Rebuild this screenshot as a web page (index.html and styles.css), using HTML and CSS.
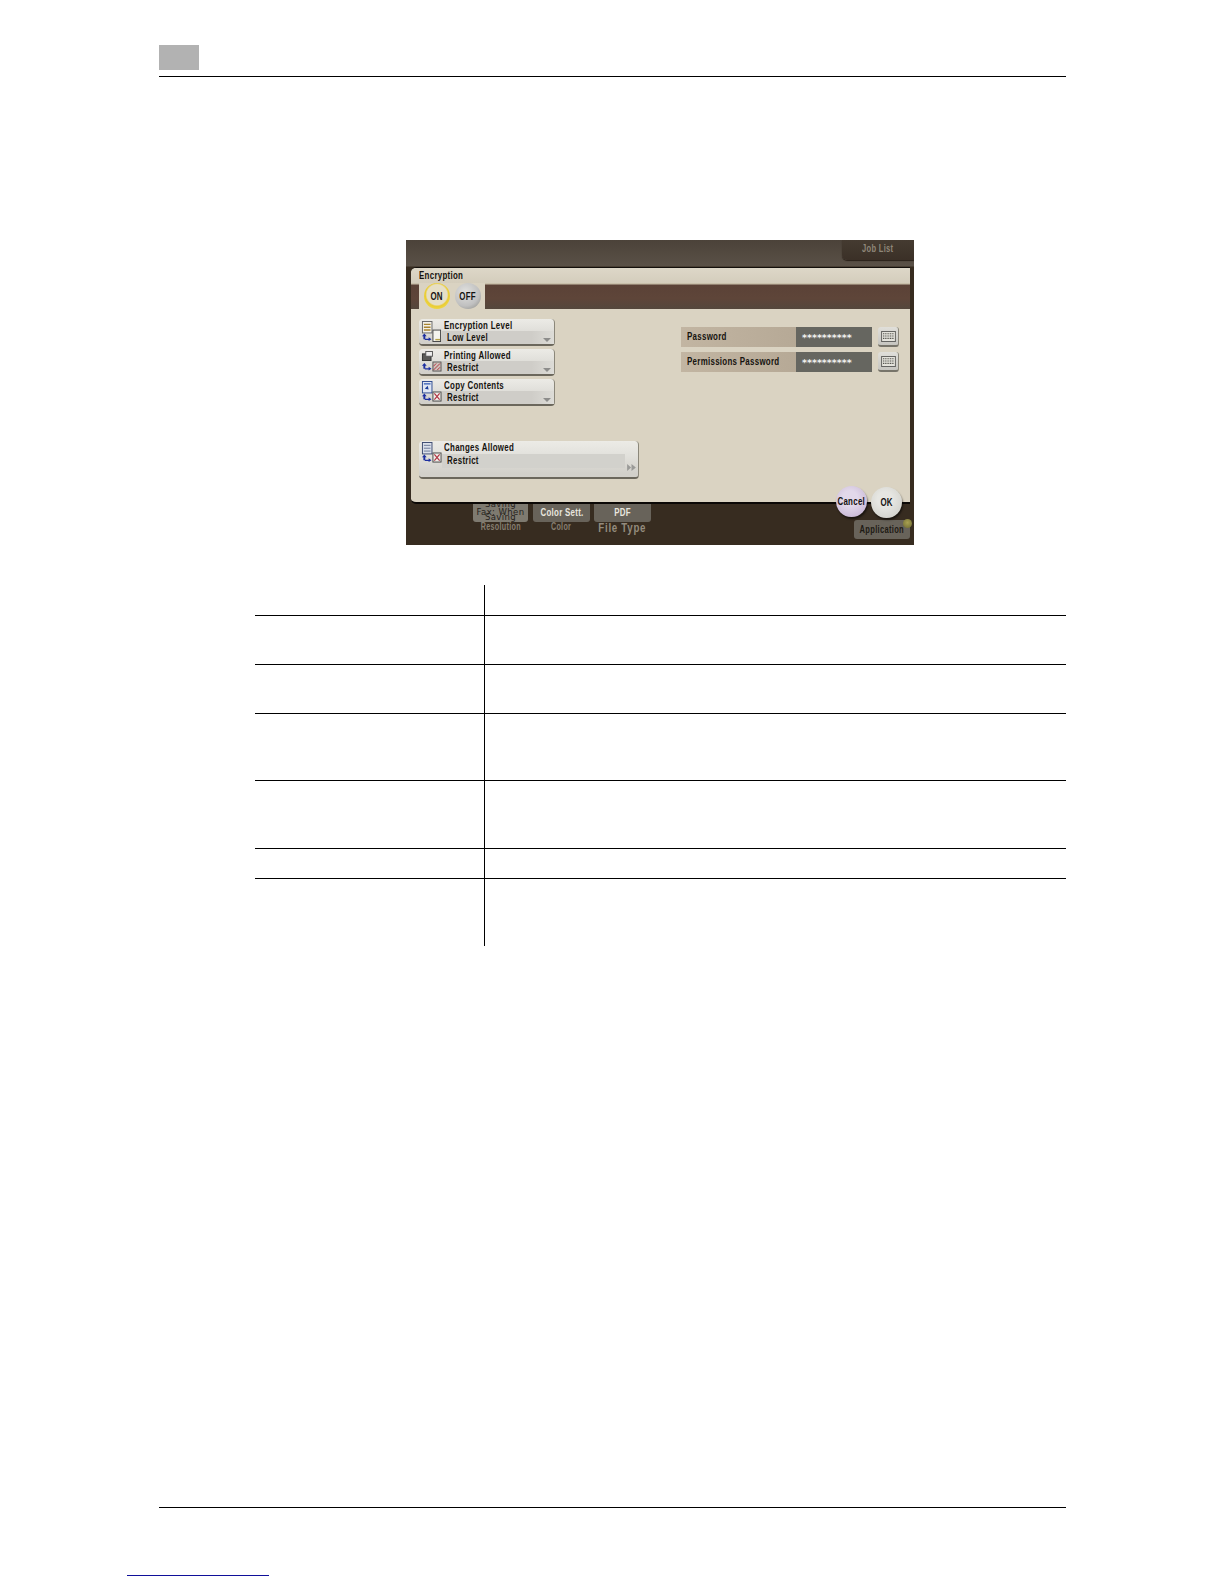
FILE: index.html
```html
<!DOCTYPE html>
<html lang="en">
<head>
<meta charset="utf-8">
<title>Encryption</title>
<link rel="stylesheet" href="styles.css">
</head>
<body>
<div class="page">
  <header class="page-head"><div class="chapter-box"></div></header>

  <section class="screen">
    <div class="topbar"><div class="job-list"><span class="t">Job List</span></div></div>

    <div class="dialog">
      <div class="dialog-title"><span class="t tl">Encryption</span></div>
      <div class="band">
        <div class="tab">
          <div class="round on"><span class="t">ON</span></div>
          <div class="round off"><span class="t">OFF</span></div>
        </div>
      </div>
      <div class="dialog-body">
        <div class="col-left">
          <div class="sel">
            <svg class="ico" viewBox="0 0 22 24"><rect x="1.500" y="1.500" width="10" height="12" fill="#f2f0e8" stroke="#666"/><path d="M3 4.500h7M3 7.500h7M3 10.500h7" stroke="#a9842f" stroke-width="1.500"/><path d="M3.500 14l2.500 3H4.500v3H2.500v-3H1z" fill="#1c2fa0"/><path d="M4 19.500h4V18l3 2-3 2v-1.200H4z" fill="#1c2fa0"/><rect x="12.500" y="10.500" width="8" height="12" fill="#f5f4ee" stroke="#444"/><path d="M15 20.500h5" stroke="#b5a24a" stroke-width="1.500"/></svg>
            <div class="sel-text"><div class="sel-name"><span class="t tl">Encryption Level</span></div><div class="sel-value"><span class="t tl">Low Level</span><span class="caret"></span></div></div>
          </div>
          <div class="sel">
            <svg class="ico" viewBox="0 0 22 24"><rect x="1.500" y="4" width="9" height="7" fill="#5a5a58" stroke="#333"/><rect x="5" y="1.500" width="7" height="5" fill="#eee" stroke="#555"/><path d="M3.500 13.500l2.500 3H4.500v3H2.500v-3H1z" fill="#1c2fa0"/><path d="M4 19h4v-1.500l3 2-3 2v-1.200H4z" fill="#1c2fa0"/><rect x="12.500" y="12.500" width="8.500" height="9.500" fill="#cfc2ba" stroke="#555"/><path d="M13 21l7-7M13 17l3-3M17 21l3-3" stroke="#b03040"/></svg>
            <div class="sel-text"><div class="sel-name"><span class="t tl">Printing Allowed</span></div><div class="sel-value"><span class="t tl">Restrict</span><span class="caret"></span></div></div>
          </div>
          <div class="sel">
            <svg class="ico" viewBox="0 0 22 24"><rect x="1.500" y="1.500" width="10" height="12" fill="#dfe6f2" stroke="#2c4a90"/><path d="M3 4h7" stroke="#3a62b8" stroke-width="1.400"/><path d="M4 9l3-3 1 4z" fill="#1c3f9c"/><path d="M3.500 14l2.500 3H4.500v3H2.500v-3H1z" fill="#1c2fa0"/><path d="M4 19.500h4V18l3 2-3 2v-1.200H4z" fill="#1c2fa0"/><rect x="12.500" y="12.500" width="8.500" height="9.500" fill="#efeee8" stroke="#444"/><path d="M14 14l5.500 6.500M19.500 14L14 20.500" stroke="#b03040" stroke-width="1.200"/></svg>
            <div class="sel-text"><div class="sel-name"><span class="t tl">Copy Contents</span></div><div class="sel-value"><span class="t tl">Restrict</span><span class="caret"></span></div></div>
          </div>
          <div class="sel sel-wide">
            <svg class="ico" viewBox="0 0 22 24"><rect x="1.500" y="1.500" width="10" height="12" fill="#dbe0ea" stroke="#3c4a70"/><path d="M3 4.500h7M3 7.500h7M3 10.500h7" stroke="#6a7796"/><path d="M3.500 14l2.500 3H4.500v3H2.500v-3H1z" fill="#1c2fa0"/><path d="M4 19.500h4V18l3 2-3 2v-1.200H4z" fill="#1c2fa0"/><rect x="12.500" y="12.500" width="8.500" height="9.500" fill="#efeee8" stroke="#444"/><path d="M14 14l5.500 6.500M19.500 14L14 20.500" stroke="#b03040" stroke-width="1.200"/></svg>
            <div class="sel-text"><div class="sel-name"><span class="t tl">Changes Allowed</span></div><div class="sel-value"><span class="t tl">Restrict</span></div></div>
            <svg class="ffwd" viewBox="0 0 10 8"><path d="M0 0l4.500 4L0 8zM5 0l5 4-5 4z" fill="#9a9a98"/></svg>
          </div>
        </div>
        <div class="col-right">
          <div class="pw-row">
            <div class="pw-label"><span class="t tl">Password</span></div><div class="pw-value">**********</div>
            <div class="kbd"><svg viewBox="0 0 16 12"><rect x=".5" y=".5" width="15" height="11" fill="#e4e3dc" stroke="#5a5a58"/><path d="M2 3h12M2 5.500h12M2 8h12" stroke="#55554f" stroke-width="1.200" stroke-dasharray="1.200 .7"/></svg></div>
          </div>
          <div class="pw-row">
            <div class="pw-label"><span class="t tl">Permissions Password</span></div><div class="pw-value">**********</div>
            <div class="kbd"><svg viewBox="0 0 16 12"><rect x=".5" y=".5" width="15" height="11" fill="#e4e3dc" stroke="#5a5a58"/><path d="M2 3h12M2 5.500h12M2 8h12" stroke="#55554f" stroke-width="1.200" stroke-dasharray="1.200 .7"/></svg></div>
          </div>
        </div>
      </div>
    </div>

    <div class="bottombar">
      <div class="tool tool-fax">
        <div class="tool-btn fax"><span class="fax-top">Saving</span><span>Fax: When</span><span>Saving</span></div>
        <div class="tool-label"><span class="t">Resolution</span></div>
      </div>
      <div class="tool tool-color">
        <div class="tool-btn"><span class="t">Color Sett.</span></div>
        <div class="tool-label"><span class="t">Color</span></div>
      </div>
      <div class="tool tool-pdf">
        <div class="tool-btn"><span class="t">PDF</span></div>
        <div class="tool-label big"><span class="t">File Type</span></div>
      </div>
      <div class="application"><span class="t">Application</span></div>
    </div>

    <div class="round cancel"><span class="t">Cancel</span></div>
    <div class="round ok"><span class="t">OK</span></div>
    <div class="led"></div>
  </section>

  <table class="spec">
    <tbody>
      <tr class="r30"><td></td><td></td></tr>
      <tr class="r49"><td></td><td></td></tr>
      <tr class="r49"><td></td><td></td></tr>
      <tr class="r67"><td></td><td></td></tr>
      <tr class="r68"><td></td><td></td></tr>
      <tr class="r30"><td></td><td></td></tr>
      <tr class="r68"><td></td><td></td></tr>
    </tbody>
  </table>

  <footer class="page-foot"></footer>
  <a class="stray-link" href="#"></a>
</div>
</body>
</html>
```

FILE: styles.css
```css
* { box-sizing: border-box; }
html, body { margin: 0; padding: 0; background: #fff; }
.page {
  width: 1224px;
  height: 1584px;
  padding: 45px 158px 0 159px;
  position: relative;
  overflow: hidden;
  font-family: "Liberation Sans", Arial, sans-serif;
}
.page-head {
  height: 32px;
  border-bottom: 1px solid #000;
}
.chapter-box { width: 40px; height: 25px; background: #b2b2b2; }

/* Photographed control panel: its lettering is a tall, narrow bold face */
.screen {
  position: relative;
  width: 508px;
  height: 305px;
  margin: 163px 0 0 247px;
  background: linear-gradient(#4b4239 0, #5a5147 26px, #372c20 27px);
  overflow: hidden;
  font-weight: 700;
  letter-spacing: .4px;
}
.t {
  display: inline-block;
  white-space: nowrap;
  transform: scaleX(.72);
  transform-origin: center;
}
.tl { transform-origin: left center; }

.topbar { height: 20px; display: flex; justify-content: flex-end; }
.job-list {
  width: 72px;
  height: 20px;
  padding-top: 3px;
  border-radius: 0 0 0 5px;
  background: linear-gradient(#453b31, #3b3027);
  box-shadow: 0 1px 1px #2a2119;
  color: #8f8779;
  font-size: 10.500px;
  line-height: 11px;
  text-align: center;
}
.dialog {
  position: relative;
  width: 499px;
  height: 237px;
  margin: 7px 0 0 5px;
  border-top: 1px solid #14100c;
  border-bottom: 2px solid #0b0806;
  border-radius: 5px 0 0 5px;
  background: #dad3c2;
  color: #16130f;
}
.dialog-title {
  height: 15px;
  padding: 0 0 0 8px;
  font-size: 11px;
  line-height: 14px;
  background: linear-gradient(#ddd7c8, #d4cdbc);
  border-radius: 5px 0 0 0;
}
.band {
  height: 26px;
  padding-left: 8px;
  background: linear-gradient(#c9c0ab 0, #c9c0ab 1px, #5b4237 2px, #5e4539 60%, #54473c 100%);
}
.tab {
  width: 66px;
  height: 26px;
  background: #dad3c2;
  display: flex;
  align-items: center;
  gap: 5px;
  padding: 0 0 0 5px;
}
.round {
  width: 26px;
  height: 26px;
  flex: none;
  display: flex;
  align-items: center;
  justify-content: center;
  border-radius: 50%;
  font-size: 11px;
  line-height: 13px;
  color: #141210;
}
.on {
  background: radial-gradient(circle at 50% 45%, #e6dfc6 52%, #e9cc35 60%, #f1dc4c 82%, #a39a50 100%);
}
.off {
  background: radial-gradient(circle at 40% 35%, #dcdcda 10%, #c0c0c0 60%, #86867f 100%);
}
.dialog-body {
  display: flex;
  justify-content: space-between;
  padding: 10px 11px 0 8px;
}
.col-left { display: flex; flex-direction: column; gap: 3px; align-items: flex-start; }
.sel {
  position: relative;
  width: 136px;
  height: 27px;
  display: flex;
  padding: 1px 0 0 2px;
  border-radius: 4px;
  border-bottom: 2px solid #6b675c;
  border-right: 1px solid #8b877a;
  background: linear-gradient(#ecebe6, #e2e1dc 40%, #d2d0ca 90%);
}
.ico { width: 21px; height: 23px; flex: none; }
.sel-text { flex: 1; min-width: 0; }
.sel-name { height: 11px; font-size: 11px; line-height: 10px; padding-left: 2px; }
.sel-value {
  position: relative;
  height: 13px;
  padding-left: 5px;
  font-size: 11px;
  line-height: 12px;
  background: linear-gradient(90deg, #cfcdc8 80%, #dddcd7 100%);
}
.caret {
  position: absolute;
  right: 3px;
  bottom: 2px;
  border-left: 4px solid transparent;
  border-right: 4px solid transparent;
  border-top: 4px solid #8d8d8b;
}
.sel-wide { width: 220px; height: 38px; margin-top: 32px; padding-top: 0; }
.sel-wide .sel-name { height: 13px; line-height: 12px; }
.sel-wide .sel-value { height: 14px; line-height: 12px; margin-right: 13px; background: #d2d1cc; }
.ffwd { position: absolute; right: 2px; bottom: 6px; width: 9px; height: 7px; }

.col-right { display: flex; flex-direction: column; gap: 5px; padding-top: 8px; }
.pw-row { display: flex; height: 20px; }
.pw-label {
  width: 115px;
  padding-left: 6px;
  background: linear-gradient(90deg, #c2b5a2, #b6a996);
  font-size: 11px;
  line-height: 19px;
  white-space: nowrap;
}
.pw-value {
  width: 76px;
  padding-left: 6px;
  background: #666660;
  color: #f2f2f0;
  font-family: "DejaVu Sans", sans-serif;
  font-size: 9.500px;
  line-height: 22px;
  letter-spacing: 0;
  white-space: nowrap;
}
.kbd {
  width: 21px;
  height: 20px;
  margin-left: 6px;
  padding: 4px 3px;
  border-radius: 3px;
  background: linear-gradient(#e0dfda, #c6c5c0);
  border-bottom: 2px solid #77746a;
  border-right: 1px solid #8b877a;
}
.kbd svg { display: block; width: 15px; height: 11px; }

.bottombar {
  display: flex;
  align-items: flex-start;
  height: 41px;
  padding-left: 67px;
}
.tool { display: flex; flex-direction: column; align-items: center; }
.tool-fax { width: 55px; margin-right: 5px; }
.tool-color { width: 57px; margin-right: 4px; }
.tool-pdf { width: 57px; }
.tool-btn {
  width: 100%;
  height: 18px;
  display: flex;
  justify-content: center;
  border-radius: 0 0 3px 3px;
  background: #68635a;
  color: #e8e6df;
  font-size: 11px;
  line-height: 16px;
}
.fax {
  background: #7e7a70;
  color: #26221c;
  font-family: "DejaVu Sans", sans-serif;
  font-size: 8.500px;
  line-height: 5px;
  overflow: hidden;
  font-weight: 400;
  flex-direction: column;
  justify-content: flex-end;
  align-items: center;
  padding-bottom: 2px;
}
.fax span { display: block; height: 5px; flex: none; white-space: nowrap; }
.fax .fax-top { margin-bottom: 3px; }
.tool-label { margin-top: -1px; color: #867e71; font-size: 10px; line-height: 12px; white-space: nowrap; }
.big { font-size: 13.500px; line-height: 14px; color: #938b7d; letter-spacing: 1px; }
.application {
  width: 56px;
  height: 19px;
  margin: 16px 4px 0 auto;
  display: flex;
  justify-content: center;
  border-radius: 3px;
  background: #68635a;
  color: #1e1a14;
  font-size: 10.500px;
  line-height: 18px;
}
.cancel, .ok {
  position: absolute;
  width: 31px;
  height: 31px;
  box-shadow: 1px 2px 2px rgba(0,0,0,.55);
}
.cancel {
  left: 430px;
  top: 246px;
  background: radial-gradient(circle at 45% 40%, #e2d8ea 30%, #c9b8d6 80%, #a897b5 100%);
}
.ok {
  left: 465px;
  top: 247px;
  background: radial-gradient(circle at 45% 40%, #e6e6e2 30%, #d2d2cc 80%, #a5a5a0 100%);
}
.led {
  position: absolute;
  left: 497px;
  top: 279px;
  width: 9px;
  height: 9px;
  border-radius: 50%;
  background: radial-gradient(circle at 50% 40%, #a8a052, #6d6a30);
}

/* Empty rule table */
.spec {
  width: 811px;
  margin: 40px 0 0 96px;
  border-collapse: collapse;
  table-layout: fixed;
}
.spec td { padding: 0; border-top: 1px solid #000; }
.spec tr:first-child td { border-top: 0; }
.spec td:first-child { width: 229px; border-right: 1px solid #000; }
.r30 { height: 30px; }
.r49 { height: 49px; }
.r67 { height: 67px; }
.r68 { height: 68px; }

.page-foot {
  position: absolute;
  left: 159px;
  right: 158px;
  top: 1507px;
  border-top: 1px solid #000;
}
.stray-link {
  position: absolute;
  left: 127px;
  top: 1575px;
  width: 142px;
  border-top: 1px solid #10109a;
}
```
